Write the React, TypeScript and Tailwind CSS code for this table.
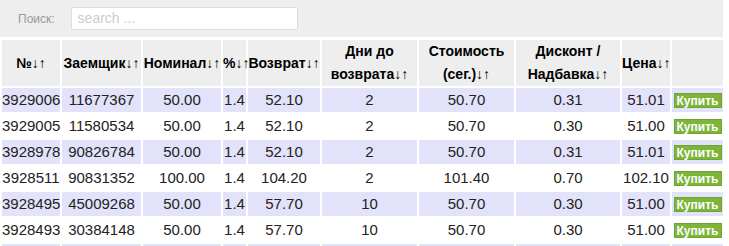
import React from "react";

const rows = [
  ["3929006", "11677367", "50.00", "1.4", "52.10", "2", "50.70", "0.31", "51.01"],
  ["3929005", "11580534", "50.00", "1.4", "52.10", "2", "50.70", "0.30", "51.00"],
  ["3928978", "90826784", "50.00", "1.4", "52.10", "2", "50.70", "0.31", "51.01"],
  ["3928511", "90831352", "100.00", "1.4", "104.20", "2", "101.40", "0.70", "102.10"],
  ["3928495", "45009268", "50.00", "1.4", "57.70", "10", "50.70", "0.30", "51.00"],
  ["3928493", "30384148", "50.00", "1.4", "57.70", "10", "50.70", "0.30", "51.00"],
  ["3928491", "1596795", "50.00", "1.4", "57.70", "10", "50.70", "0.30", "51.00"],
];

const widths = [58, 79, 78, 23, 72, 95, 95, 104, 48, 51];

function Arr() {
  return <span className="font-normal">↓↑</span>;
}

const heads: React.ReactNode[] = [
  <>№<Arr /></>,
  <>Заемщик<Arr /></>,
  <>Номинал<Arr /></>,
  <>%<Arr /></>,
  <>Возврат<Arr /></>,
  <>Дни до возврата<Arr /></>,
  <>Стоимость (сег.)<Arr /></>,
  <>Дисконт / Надбавка<Arr /></>,
  <>Цена<Arr /></>,
  null,
];

export default function App() {
  return (
    <div className="w-[729px] h-[246px] overflow-hidden bg-white text-[#222]" style={{ fontFamily: '"Liberation Sans", Arial, sans-serif' }}>
      <div className="w-[723px] h-[37px] bg-[#eeeeee] flex items-center">
        <span className="ml-[18px] text-[12px] text-[#999]">Поиск:</span>
        <div className="ml-[16px] w-[227px] h-[23px] bg-white border border-[#dddddd] rounded-[2px] flex items-center pl-[6px] text-[14px] text-[#cccccc]">
          search ...
        </div>
      </div>
      <table className="mt-[1px] table-fixed border-separate border-spacing-[2px] w-[725px]">
        <colgroup>
          {widths.map((w, i) => (
            <col key={i} style={{ width: w }} />
          ))}
        </colgroup>
        <thead>
          <tr>
            {heads.map((h, i) => (
              <th key={i} className="h-[46px] p-0 bg-[#eeeeee] text-[14px] font-bold leading-[23px] text-center text-black">
                {h}
              </th>
            ))}
          </tr>
        </thead>
        <tbody>
          {rows.map((r, ri) => (
            <tr key={ri} className={ri % 2 === 0 ? "bg-[#e2e2fa]" : "bg-white"}>
              {r.map((c, ci) => (
                <td key={ci} className="h-[22.5px] p-0 text-[15px] leading-[18px] text-center whitespace-nowrap">
                  {c}
                </td>
              ))}
              <td className="h-[22.5px] p-0 text-center">
                <span className="inline-flex items-center justify-center w-[48px] h-[15px] bg-[#7cb53a] border border-[#6ea530] text-white font-bold text-[12px] leading-none align-middle" style={{ fontFamily: '"Liberation Sans Narrow", "Arial Narrow", "Liberation Sans", sans-serif' }}>
                  Купить
                </span>
              </td>
            </tr>
          ))}
        </tbody>
      </table>
    </div>
  );
}
